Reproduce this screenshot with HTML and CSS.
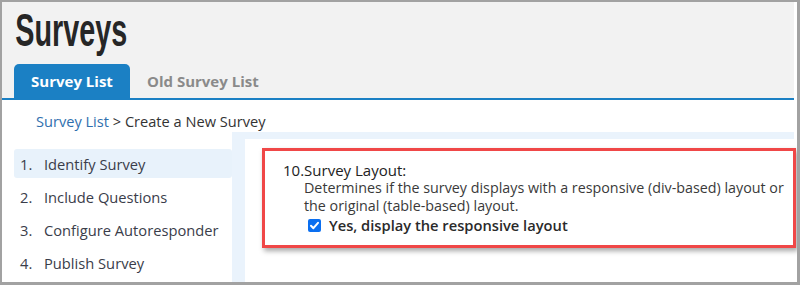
FILE: index.html
```html
<!DOCTYPE html>
<html>
<head>
<meta charset="utf-8">
<link rel="stylesheet" href="styles.css">
</head>
<body>
<div class="frame">
  <div class="page">
    <header class="header">
      <h1 class="title">Surveys</h1>
      <nav class="tabs">
        <a class="tab tab-active">Survey List</a>
        <a class="tab">Old Survey List</a>
      </nav>
    </header>
    <div class="crumbs"><a class="crumb-link">Survey List</a> &gt; Create a New Survey</div>
    <div class="main">
      <ol class="steps">
        <li class="step step-active"><span class="num">1.</span>Identify Survey</li>
        <li class="step"><span class="num">2.</span>Include Questions</li>
        <li class="step"><span class="num">3.</span>Configure Autoresponder</li>
        <li class="step"><span class="num">4.</span>Publish Survey</li>
      </ol>
      <section class="panel">
        <div class="panel-inner">
          <div class="callout">
            <div class="q-title">10.Survey Layout:</div>
            <div class="q-desc">Determines if the survey displays with a responsive (div-based) layout or<br>the original (table-based) layout.</div>
            <label class="q-check"><span class="cbox"><svg viewBox="0 0 13 13" width="13" height="13"><path d="M3 6.8 L5.4 9.2 L10 3.8" fill="none" stroke="#fff" stroke-width="2" stroke-linecap="round" stroke-linejoin="round"/></svg></span>Yes, display the responsive layout</label>
          </div>
        </div>
      </section>
    </div>
  </div>
</div>
</body>
</html>
```

FILE: styles.css
```css
* { box-sizing: border-box; }
html, body { margin: 0; padding: 0; }
body {
  width: 800px;
  height: 285px;
  overflow: hidden;
  font-family: "Open Sans", "Liberation Sans", sans-serif;
  color: #333;
}
.frame {
  width: 800px;
  height: 285px;
  border-style: solid;
  border-color: #a2a2a2;
  border-width: 2px 3px 3px 2px;
  background: #fff;
  overflow: hidden;
}
.page {
  width: 795px;
  height: 280px;
  padding-right: 3px;
  background: #fff;
  display: flex;
  flex-direction: column;
}
.header {
  height: 98px;
  background: #f2f2f2;
  border-bottom: 2px solid #1b80c4;
  display: flex;
  flex-direction: column;
  justify-content: space-between;
  padding-left: 12px;
}
.title {
  margin: 0;
  padding: 3px 0 0 2px;
  font-family: "Liberation Sans", Arial, sans-serif;
  font-weight: 700;
  font-size: 46px;
  line-height: 50px;
  color: #262626;
  transform: scaleX(0.625);
  transform-origin: left center;
  white-space: nowrap;
}
.tabs {
  display: flex;
  align-items: flex-end;
}
.tab {
  height: 34px;
  display: flex;
  align-items: center;
  justify-content: center;
  white-space: nowrap;
  font-size: 15px;
  font-weight: 700;
  color: #8a8a8a;
  padding: 0 17px;
  border-radius: 5px 5px 0 0;
}
.tab-active {
  background: #1b80c4;
  color: #fff;
  width: 116px;
  padding: 0;
}
.crumbs {
  height: 32px;
  padding: 11px 0 0 34px;
  font-size: 14.6px;
  line-height: 20px;
  color: #333;
}
.crumb-link { color: #2f6fae; }
.main {
  flex: 1;
  display: flex;
  min-height: 0;
}
.steps {
  list-style: none;
  margin: 0;
  padding: 17px 0 0 12px;
  width: 230px;
  display: flex;
  flex-direction: column;
  gap: 4px;
}
.step {
  height: 29px;
  display: flex;
  align-items: center;
  padding-left: 6px;
  font-size: 14.7px;
  color: #3a3d4a;
  border-radius: 3px;
}
.step-active { background: #e8f2fb; }
.num { width: 24px; }
.panel {
  flex: 1;
  background: #eaf3fc;
  padding: 7px 0 0 13px;
}
.panel-inner {
  background: #fff;
  height: 100%;
  padding: 9px 0 0 17px;
}
.callout {
  margin-right: -2px;
  height: 100px;
  border: 3px solid #f04747;
  box-shadow: 2px 3px 5px rgba(0,0,0,0.35);
  padding: 10px 0 0 18px;
  font-size: 14.6px;
  line-height: 17.5px;
  color: #3a3a3a;
  overflow: hidden;
}
.q-title {
  font-size: 15px;
  color: #222;
  line-height: 18px;
}
.q-desc {
  padding-left: 21px;
  font-size: 14.3px;
  white-space: nowrap;
}
.q-check {
  display: flex;
  align-items: center;
  padding: 3px 0 0 25px;
  font-size: 14.7px;
  font-weight: 600;
  color: #2a2a2a;
  gap: 8px;
}
.cbox {
  width: 13px;
  height: 13px;
  background: #0b6ff0;
  border-radius: 2px;
  display: flex;
}
```
